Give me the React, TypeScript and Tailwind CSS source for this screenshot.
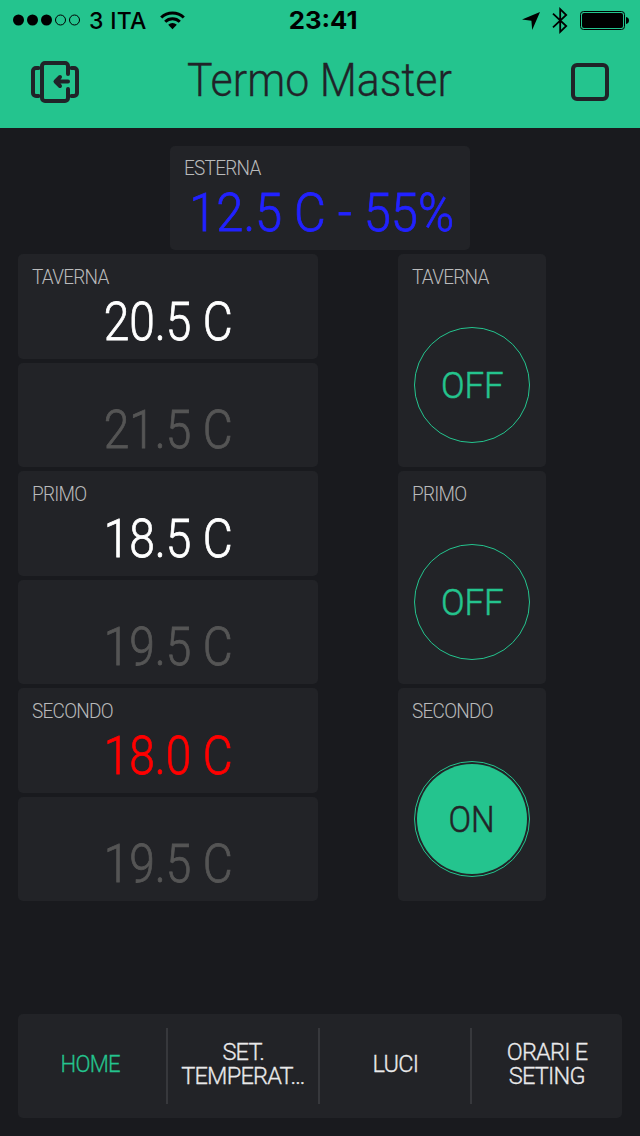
import { clsx } from "clsx";

type Zone = {
  name: string;
  current: string;
  target: string;
  on: boolean;
  color: string;
};

const ZONES: Zone[] = [
  { name: "TAVERNA", current: "20.5 C", target: "21.5 C", on: false, color: "text-white" },
  { name: "PRIMO", current: "18.5 C", target: "19.5 C", on: false, color: "text-white" },
  { name: "SECONDO", current: "18.0 C", target: "19.5 C", on: true, color: "text-[#ff0000]" },
];

const TABS = [
  { lines: ["HOME"], active: true },
  { lines: ["SET.", "TEMPERAT…"], active: false },
  { lines: ["LUCI"], active: false },
  { lines: ["ORARI E", "SETING"], active: false },
];

function StatusBar() {
  return (
    <div className="grid h-10 grid-cols-3 items-center font-['Inter','Liberation_Sans',sans-serif] text-black">
      <div className="flex items-center pl-[13px]">
        <svg width="67" height="12" viewBox="0 0 67 12">
          <circle cx="5.5" cy="6" r="5.5" />
          <circle cx="19.5" cy="6" r="5.5" />
          <circle cx="33.5" cy="6" r="5.5" />
          <circle cx="47.5" cy="6" r="5" fill="none" stroke="black" />
          <circle cx="61.5" cy="6" r="5" fill="none" stroke="black" />
        </svg>
        <span className="mt-px ml-[9px] w-[59px] text-[23px] leading-6 font-medium tracking-[0.3px] whitespace-nowrap">3 ITA</span>
        <svg className="ml-3" width="25" height="19" viewBox="0 0 25 19" fill="none" stroke="black" strokeWidth="3">
          <path d="M1.2 6.5a16.2 16.2 0 0 1 22.6 0M5.2 10.8a10.4 10.4 0 0 1 14.6 0" />
          <path d="M12.5 18.2 8.2 13.8a6.2 6.2 0 0 1 8.6 0z" fill="black" stroke="none" />
        </svg>
      </div>
      <div className="mt-px pl-[7px] text-center text-[24px] leading-6 font-bold">
        <span className="inline-block scale-x-[1.07]">23:41</span>
      </div>
      <div className="flex items-center justify-end pr-[11px]">
        <svg className="mt-[2px]" width="18" height="18" viewBox="0 0 18 18">
          <path d="M18 0 10.2 18 9.4 8.7 0 7.6z" />
        </svg>
        <svg className="ml-[12px]" width="16" height="27" viewBox="0 0 16 27" fill="none" stroke="black" strokeWidth="1.8">
          <path d="M1 6.7 14.2 19 8.2 24.8V2.2l6 5.8L1 20.3" />
        </svg>
        <svg className="ml-[12px]" width="49" height="19" viewBox="0 0 49 19">
          <rect x="0.5" y="0.5" width="44" height="18" rx="3" fill="none" stroke="black" />
          <rect x="2" y="2" width="41" height="15" rx="2" />
          <path d="M46 6c2.2.4 3 1.800 3 3.500s-.8 3.100-3 3.500z" />
        </svg>
      </div>
    </div>
  );
}

function Header() {
  return (
    <header className="h-32 bg-[#24c48e]">
      <StatusBar />
      <div className="flex h-[84px] items-center justify-between px-[31px] text-[#202328]">
        <svg width="48" height="42" viewBox="0 0 48 42" fill="none" stroke="currentColor" strokeWidth="4" strokeLinecap="round" strokeLinejoin="round">
          <path d="M37 13V5a3 3 0 0 0-3-3H14a3 3 0 0 0-3 3v32a3 3 0 0 0 3 3h20a3 3 0 0 0 3-3v-9" />
          <path d="M7.500 7H5a3 3 0 0 0-3 3v22a3 3 0 0 0 3 3h2.500M40.500 7H43a3 3 0 0 1 3 3v22a3 3 0 0 1-3 3h-2.500" />
          <path d="M37 20.500H25M29 16l-4.500 4.500L29 25" />
        </svg>
        <h1 className="-mt-[5px] -ml-3 w-[264px] text-[46px] leading-[56px] font-light whitespace-nowrap [-webkit-text-stroke:0.3px]">
          <span className="inline-block origin-left scale-x-[0.932]">Termo Master</span>
        </h1>
        <div className="h-[38px] w-[38px] rounded-md border-4 border-current" />
      </div>
    </header>
  );
}

function Label({ text }: { text: string }) {
  return (
    <div className="h-5 px-[14px] text-[20px] leading-5 font-light tracking-[-0.8px] text-[#b9babb]">
      <span className="inline-block origin-left scale-x-[0.95]">{text}</span>
    </div>
  );
}

type ValueCardProps = {
  label?: string;
  value: string;
  color: string;
  wide?: boolean;
  className?: string;
};

function ValueCard({ label, value, color, wide, className }: ValueCardProps) {
  return (
    <div className={clsx("w-[300px] rounded-[5px] bg-[#222327]", className)}>
      <Label text={label ?? ""} />
      <div
        className={clsx(
          "mt-[10px] flex justify-center text-[53px] leading-[50px] font-light whitespace-nowrap [-webkit-text-stroke:0.8px]",
          color,
          wide && "pl-[3px]",
        )}
      >
        <span className={wide ? "scale-x-[0.922]" : "scale-x-[0.87]"}>{value}</span>
      </div>
    </div>
  );
}

function ZoneSwitch({ zone }: { zone: Zone }) {
  return (
    <div className="h-[213px] w-[148px] rounded-[5px] bg-[#222327] pt-[13px]">
      <Label text={zone.name} />
      <div className="mx-auto mt-10 flex h-[116px] w-[116px] rounded-full border border-[#24c48e] p-[2px]">
        <div
          className={clsx(
            "flex flex-1 items-center justify-center rounded-full pt-[2px] text-[37px] leading-10 font-light [-webkit-text-stroke:0.5px]",
            zone.on ? "bg-[#24c48e] text-[#222327]" : "text-[#24c48e]",
          )}
        >
          <span className={zone.on ? "scale-x-[0.9]" : "scale-x-[0.94]"}>{zone.on ? "ON" : "OFF"}</span>
        </div>
      </div>
    </div>
  );
}

function TabBar() {
  return (
    <nav className="mx-[18px] mt-[113px] flex h-[104px] items-center rounded-[5px] bg-[#222327]">
      {TABS.map((tab, i) => (
        <div
          key={tab.lines[0]}
          className={clsx(
            "flex h-[76px] flex-col items-center justify-center pb-1 text-[24px] leading-6 font-light tracking-[-0.8px] whitespace-nowrap [-webkit-text-stroke:0.3px]",
            i === 0 || i === TABS.length - 1 ? "w-[150px]" : "w-[152px]",
            i < TABS.length - 1 && "border-r-2 border-[#37383c]",
            tab.active ? "pr-[3px] text-[#24c48e]" : "text-[#e9e9ea]",
          )}
        >
          {tab.lines.map((line) => (
            <span key={line} className={tab.active ? "scale-x-[0.92]" : "scale-x-[0.98]"}>
              {line}
            </span>
          ))}
        </div>
      ))}
    </nav>
  );
}

function App() {
  return (
    <div className="h-[1136px] w-[640px] overflow-hidden bg-[#191a1e] font-['Roboto','Liberation_Sans',sans-serif]">
      <Header />
      <main className="pt-[18px]">
        <ValueCard label="ESTERNA" value="12.5 C - 55%" color="text-[#2222ff]" wide className="mx-auto h-[104px] pt-3" />
        <div className="mt-1 flex flex-col gap-1 pl-[18px]">
          {ZONES.map((zone) => (
            <div key={zone.name} className="flex gap-20">
              <div className="flex flex-col gap-1">
                <ValueCard label={zone.name} value={zone.current} color={zone.color} className="h-[105px] pt-[13px]" />
                <ValueCard value={zone.target} color="text-[#555555]" className="h-[104px] pt-3" />
              </div>
              <ZoneSwitch zone={zone} />
            </div>
          ))}
        </div>
      </main>
      <TabBar />
    </div>
  );
}

export default App;
